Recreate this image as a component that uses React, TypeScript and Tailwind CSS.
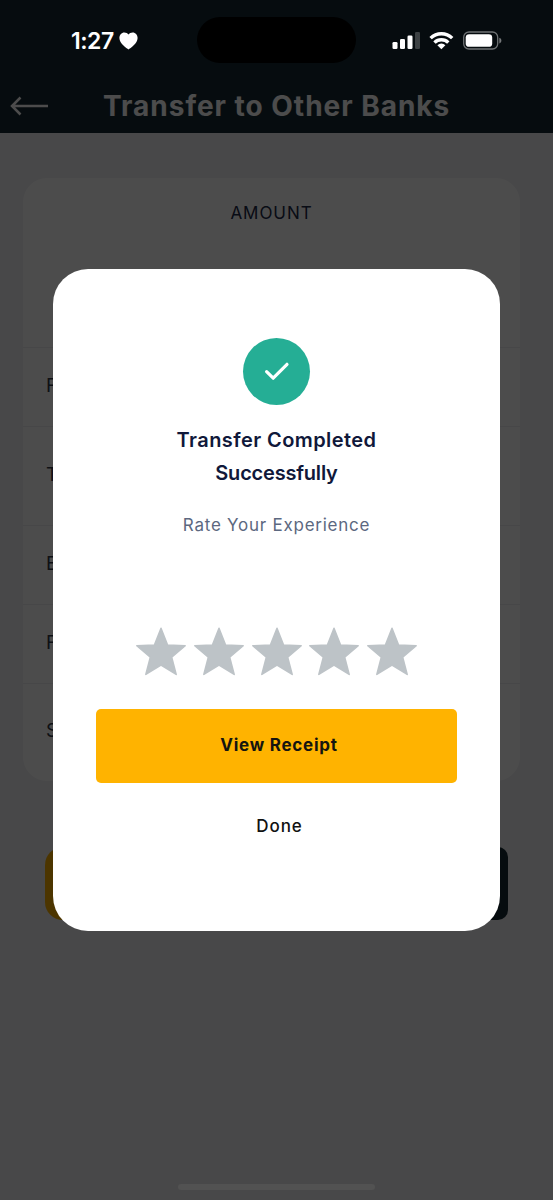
const ROWS = [
  { label: 'F', height: 'h-[79px]' },
  { label: 'T', height: 'h-[99px]' },
  { label: 'E', height: 'h-[79px]' },
  { label: 'F', height: 'h-[79px]' },
  { label: 'S', height: 'h-[97px]' },
];

function StatusBar() {
  return (
    <div className="absolute inset-x-0 top-0 h-20 text-white">
      <div className="absolute left-[71px] top-[27px] flex items-center gap-[5px]">
        <span className="text-[23px] leading-7 font-semibold tracking-[-0.5px]">1:27</span>
        <svg width="19" height="18" viewBox="0 0 19 18" fill="currentColor">
          <path d="M9.5 17.6C7.6 16.2 0.4 11.8 0.4 6.1C0.4 2.8 2.6 0.5 5.3 0.5C7.2 0.5 8.7 1.3 9.5 2.4C10.3 1.3 11.8 0.5 13.7 0.5C16.4 0.5 18.6 2.8 18.6 6.1C18.6 11.8 11.4 16.2 9.5 17.6Z" />
        </svg>
      </div>
      <div className="absolute left-[197px] top-[17px] h-[46px] w-[159px] rounded-full bg-black" />
      <svg className="absolute left-[392px] top-[31px]" width="112" height="20" viewBox="0 0 112 20" fill="none">
        {/* signal */}
        <g fill="white">
          <rect x="0.5" y="11" width="5" height="7" rx="1.3" />
          <rect x="8" y="8" width="5" height="10" rx="1.3" />
          <rect x="15.5" y="4.5" width="5" height="13.5" rx="1.3" />
          <rect x="23" y="1" width="5" height="17" rx="1.3" opacity="0.22" />
        </g>
        {/* wifi */}
        <g stroke="white" strokeWidth="3.4">
          <path d="M38.6 7.1a15.4 15.4 0 0 1 21.6 0" />
          <path d="M42.5 11.6a9.8 9.8 0 0 1 13.8 0" />
        </g>
        <path d="M49.4 18.2l-4-4a5.8 5.8 0 0 1 8 0z" fill="white" />
        {/* battery */}
        <rect x="71.7" y="1" width="34" height="17" rx="5.3" stroke="white" strokeOpacity="0.42" strokeWidth="1.3" />
        <rect x="73.7" y="3.2" width="26.5" height="12.6" rx="3.4" fill="white" />
        <path d="M107.3 6.8c2.8.8 2.8 4.8 0 5.6z" fill="white" opacity="0.45" />
      </svg>
    </div>
  );
}

function Star() {
  return (
    <svg className="shrink-0" width="50" height="49" viewBox="0 0 50 49" fill="#bdc3c7" stroke="#bdc3c7" strokeWidth="1.5" strokeLinejoin="round">
      <path d="M25 1.2L31.6 18L49.2 18.8L35.7 30.2L40.2 47.4L25 38L9.8 47.4L14.3 30.2L0.8 18.8L18.4 18Z" />
    </svg>
  );
}

function SuccessModal() {
  return (
    <div className="flex h-[662px] w-[447px] flex-col items-center rounded-[35px] bg-white px-[43px] pt-[69px]">
      <div className="flex size-[67px] shrink-0 items-center justify-center rounded-full bg-[#25ae95] pb-0.5">
        <svg width="26" height="22" viewBox="0 0 26 22" fill="none" stroke="white" strokeWidth="3.2" strokeLinecap="round" strokeLinejoin="round">
          <path d="M2.6 11.6L9.2 18.2L23 4.3" />
        </svg>
      </div>
      <h2 className="mt-[19px] text-center text-[20px] leading-[33px] font-semibold tracking-[0.42px] text-[#10183a]">
        Transfer Completed
        <br />
        <span className="tracking-[-0.2px]">Successfully</span>
      </h2>
      <p className="mt-[23px] text-[17px] leading-6 tracking-[0.75px] text-[#5c6880]">Rate Your Experience</p>
      <div className="mt-[90px] flex gap-[7.8px]">
        {[1, 2, 3, 4, 5].map(n => (
          <Star key={n} />
        ))}
      </div>
      <button className="mt-[33px] h-[74px] w-full shrink-0 rounded-[5px] bg-[#ffb300] pb-px pl-[5px] text-[17px] font-bold tracking-[0.75px] text-[#151510]">
        View Receipt
      </button>
      <button className="mt-[31px] ml-[6px] text-[17px] leading-6 font-medium tracking-[0.9px] text-[#111]">Done</button>
    </div>
  );
}

export default function App() {
  return (
    <div className="relative h-[1200px] w-full overflow-hidden bg-[#f0f0f4] font-['Inter',sans-serif]">
      <header className="flex h-[133px] items-end bg-[#172b32] pb-[13px] text-white">
        <svg className="mb-[4px] ml-[10px]" width="39" height="20" viewBox="0 0 39 20" fill="none" stroke="currentColor" strokeWidth="2.5">
          <path d="M38 10H2M10.5 1.5L2 10l8.5 8.5" />
        </svg>
        <h1 className="ml-[54px] text-[28px] leading-7 font-bold tracking-[0.98px] whitespace-nowrap">Transfer to Other Banks</h1>
      </header>

      <section className="mt-[45px] ml-[23px] h-[603px] w-[497px] overflow-hidden rounded-3xl bg-white">
        <div className="h-[169px] pt-[23px] text-center text-[17px] leading-6 tracking-[0.95px] text-[#202848]">AMOUNT</div>
        {ROWS.map((row, i) => (
          <div key={i} className={`flex items-center border-t border-[#eeeef2] pb-0.5 pl-[23px] text-[19px] text-[#303848] ${row.height}`}>
            {row.label}
          </div>
        ))}
      </section>

      <div className="mt-[66px] ml-[45px] flex h-[73px] w-[463px] justify-between">
        <div className="w-[220px] rounded-[18px] bg-[#ffb300]" />
        <div className="w-[220px] rounded-[10px] bg-[#172b32]" />
      </div>

      <div className="absolute inset-0 flex items-center justify-center bg-black/70">
        <SuccessModal />
      </div>

      <StatusBar />
      <div className="absolute bottom-[10px] left-[178px] h-[6px] w-[197px] rounded-full bg-[#525252]" />
    </div>
  );
}
